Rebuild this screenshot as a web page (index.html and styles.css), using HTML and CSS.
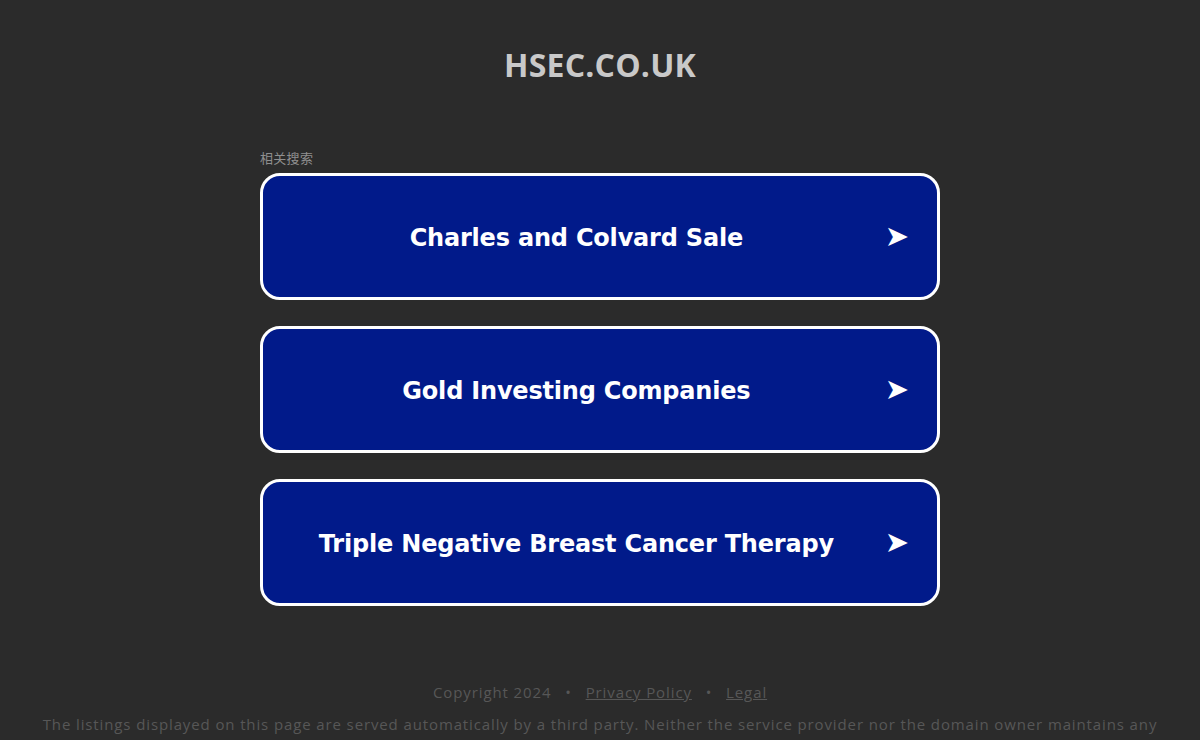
FILE: index.html
```html
<!DOCTYPE html>
<html>
<head>
<meta charset="utf-8">
<link rel="stylesheet" href="styles.css">
</head>
<body>
<div class="page">
  <h1 class="domain">HSEC.CO.UK</h1>
  <div class="results">
    <div class="label">相关搜索</div>
    <a class="btn" href="#"><span class="btn-text">Charles and Colvard Sale</span><span class="arrow">➤</span></a>
    <a class="btn" href="#"><span class="btn-text">Gold Investing Companies</span><span class="arrow">➤</span></a>
    <a class="btn" href="#"><span class="btn-text">Triple Negative Breast Cancer Therapy</span><span class="arrow">➤</span></a>
  </div>
  <div class="footer">
    <div class="links">Copyright 2024 <span class="dot">•</span> <a href="#">Privacy Policy</a> <span class="dot">•</span> <a href="#">Legal</a></div>
    <p class="disclaimer">The listings displayed on this page are served automatically by a third party. Neither the service provider nor the domain owner maintains any relationship with the advertisers. In case of trademark issues please contact the domain owner directly (contact information can be found in whois).</p>
  </div>
</div>
</body>
</html>
```
FILE: styles.css
```css
html, body {
  margin: 0;
  padding: 0;
  background: #2b2b2b;
  height: 100%;
  overflow: hidden;
}
.page {
  display: flex;
  flex-direction: column;
  align-items: center;
}
.domain {
  margin: 45px 0 0;
  font-family: "Open Sans", sans-serif;
  font-weight: 700;
  font-size: 32px;
  line-height: 40px;
  letter-spacing: 0.2px;
  color: #c9c9c9;
}
.results {
  width: 680px;
  margin-top: 65px;
  display: flex;
  flex-direction: column;
  gap: 26px;
}
.label {
  font-family: "Noto Sans CJK SC", sans-serif;
  font-size: 13px;
  line-height: 16px;
  letter-spacing: 0.3px;
  color: #8f8f8f;
  margin-bottom: -19px;
}
.btn {
  box-sizing: border-box;
  height: 127px;
  border: 3px solid #ffffff;
  border-radius: 20px;
  background: #011a8a;
  display: flex;
  align-items: center;
  padding: 3px 29px 0 30px;
  text-decoration: none;
  color: #ffffff;
}
.btn-text {
  flex: 1;
  text-align: center;
  font-family: "DejaVu Sans", Verdana, sans-serif;
  font-weight: 700;
  font-size: 24px;
  letter-spacing: -0.2px;
}
.arrow {
  font-family: "DejaVu Sans", sans-serif;
  font-size: 29px;
  margin-left: 25px;
  margin-right: -1px;
  position: relative;
  top: -2px;
}
.footer {
  margin-top: 75px;
  text-align: center;
  font-family: "Open Sans", sans-serif;
  color: #575757;
}
.links {
  font-size: 15px;
  line-height: 22px;
  letter-spacing: 0.9px;
}
.links a {
  color: #575757;
}
.dot {
  margin: 0 9px;
}
.disclaimer {
  margin: 10px 0 0;
  padding: 0 36px;
  font-size: 15px;
  line-height: 22px;
  letter-spacing: 0.88px;
}
```
